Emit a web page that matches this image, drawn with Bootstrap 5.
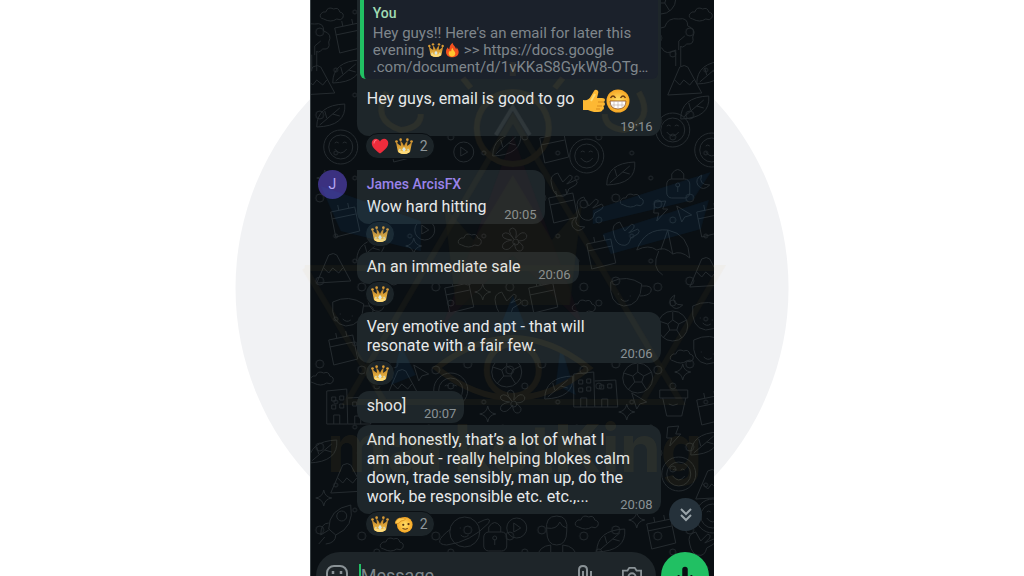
<!DOCTYPE html>
<html lang="en">
<head>
<meta charset="utf-8">
<meta name="viewport" content="width=device-width, initial-scale=1">
<title>Group chat</title>
<link href="https://cdn.jsdelivr.net/npm/bootstrap@5.3.0/dist/css/bootstrap.min.css" rel="stylesheet">
<style>
body{font-family:Roboto,"Noto Sans",sans-serif;background:#fff;color:#e6e9ea}
.stage{height:100vh}
.disc{width:54%;aspect-ratio:1;border-radius:50%;background:#f1f2f4;top:50%;left:50%;transform:translate(-50%,-50%)}
.phone{width:39.5%;min-width:320px;background:#0a0f13;border-left:1px solid #3c4347}
.wall,.mark-art{inset:0;width:100%;height:100%}
.mark-art{pointer-events:none;overflow:visible}
.thread{padding-left:46px}
.bubble{background:#1e262a;border-radius:12px;padding:5px 9px 8px 10px;font-size:16px;line-height:19px;width:fit-content;max-width:85%}
.bubble.short-msg{padding-right:58px}
.bubble.wide-msg{width:85%}
.bubble.first{border-radius:0 0 12px 12px;padding:0 3px 26px}
.bubble.named{border-top-left-radius:0;margin-top:11px}
.bubble.joined{margin-top:2px}
.bubble time{position:absolute;right:8px;bottom:2px;font-size:13px;line-height:15px;color:#899195}
.quote{background:#1b212b;border-left:4px solid #21c063;border-radius:0 0 6px 6px;padding:4px 0 3px 9px;font-size:15px;line-height:17px;color:#7f868b;white-space:nowrap}
.quote-name{font-size:14px;line-height:18px;margin-bottom:3px;color:#a0dbb4;font-weight:500}
.sender{font-size:14px;line-height:18px;font-weight:500;color:#9a83ea;margin-bottom:4px}
.first-text{padding:10px 7px 0;line-height:20px}
.emo{width:16px;height:16px;vertical-align:-3px}
.emo-lg{width:24px;height:24px;margin:-4px 0 -3px;vertical-align:-6px}
.react{height:26px;border:1px solid #0a0f13;background:#1c2428;border-radius:13px;margin:-3px 0 5px 8px;padding:0 5px;color:#8f979b;font-size:14px;line-height:20px;gap:6px;width:fit-content}
.react .emo{width:18px;height:18px}
.react span{padding:0 1px}
.avatar{width:29px;height:29px;left:-39px;top:0;border-radius:50%;background:#3b3180;color:#b6a8f5;font-size:14px}
.composer{margin-top:15px;padding:0 5px 0 5px;gap:5px}
.field{height:48px;min-width:0;border-radius:24px;background:#1e2529;padding:0 13px 0 10px;color:#8a9296}
.field input{background:none;border:0;outline:0;color:#e6e9ea;font-size:18px;padding:0;width:0;line-height:20px}
.field input::placeholder{color:#7f878b;opacity:1}
.caret{width:2px;height:24px;background:#21c063;margin-left:11px}
.icon-btn{background:none;border:0;padding:0;color:#8a9296;line-height:0}
.mic{width:48px;height:48px;border-radius:50%;background:#21c063;color:#0a0f13}
.jump{width:33px;height:33px;border-radius:50%;background:#25313a;color:#9aa4a9;right:12px;top:-54px}
</style>
</head>
<body>
<svg width="0" height="0" class="position-absolute" aria-hidden="true">
<defs>
<linearGradient id="gold" x2="0" y2="1"><stop stop-color="#b87c26"/><stop offset="1" stop-color="#ffc94a"/></linearGradient>
<radialGradient id="skin"><stop stop-color="#ffe16a"/><stop offset="1" stop-color="#f6a623"/></radialGradient>
<symbol id="crown" viewBox="0 0 24 24"><path d="M7 14L9 6l3 6 3-6 2 8-5 3z" fill="#7a5018"/><path d="M1 6l4 4 3 2L7 4l4 6 1 3 1-3 4-6-1 8 3-2 4-4-3 14q-8 5-16 0z" fill="url(#gold)"/><g fill="#d99b35"><circle cx="2" cy="6" r="1.800"/><circle cx="7.500" cy="3.500" r="1.800"/><circle cx="16.500" cy="3.500" r="1.800"/><circle cx="22" cy="6" r="1.800"/></g><path d="M4.500 17q7.500 4 15 0l-.5 3.500q-7 4-14 0z" fill="#ffdc7a"/><path d="M12 13l2.500 3.500L12 20l-2.500-3.500z" fill="#d5e6e4"/><circle cx="6.500" cy="17" r="1.300" fill="#d9d6b0"/><circle cx="17.500" cy="17" r="1.300" fill="#d9d6b0"/></symbol>
<symbol id="heart" viewBox="0 0 24 24"><path d="M12 22C5 17 1 13 1 8c0-6 8-8 11-2 3-6 11-4 11 2 0 5-4 9-11 14z" fill="#ee2c3c"/><path d="M4 8q0-3 3-4" stroke="#ff7480" stroke-width="1.500" fill="none" stroke-linecap="round"/></symbol>
<symbol id="fire" viewBox="0 0 24 24"><path d="M12 23C6 23 3 19 3 15c0-3 1-5 3-7 0 2 1 3 2 3 0-4 2-8 5-10 0 4 5 6 5 10 1-1 1-2 1-3 2 3 3 5 3 7 0 5-4 8-10 8z" fill="#f4511e"/><path d="M12 22c-3 0-5-2-5-5 0-2 1-3 2-4 1 1 1 1 2 1 0-2 0-4 2-5 0 3 4 5 4 8 0 3-2 5-5 5z" fill="#ffc52e"/></symbol>
<symbol id="thumb" viewBox="0 0 24 24"><path d="M1 11q6 1 8-4l3-5q1-2 3-1t1 4l-1 4h5q3 0 3 2t-2 2q2 0 2 2t-2 2q1 0 1 2t-2 2q1 0 0 1-1 1-4 1h-4q-4-1-6-2H1z" fill="#fdb833"/><path d="M16 13h5M15 17h5M14 20h4" stroke="#d98a1c" stroke-width="1" fill="none"/><path d="M9 12l4-7" stroke="#ffdb70" stroke-width="2"/></symbol>
<symbol id="grin" viewBox="0 0 24 24"><circle cx="12" cy="12" r="11.500" fill="url(#skin)"/><path d="M4.500 9q2.500-4 5 0M14.500 9q2.500-4 5 0" stroke="#6b3d12" stroke-width="1.400" fill="none"/><path d="M4 12h16q0 8-8 8t-8-8z" fill="#fff" stroke="#8a4d1c" stroke-width=".8"/><path d="M4.500 16h15M8 12v7M12 12v8M16 12v7" stroke="#b9aaa0" stroke-width=".6"/></symbol>
<symbol id="salute" viewBox="0 0 24 24"><circle cx="13" cy="13" r="10.500" fill="url(#skin)"/><circle cx="11" cy="13" r="1.500" fill="#59320f"/><circle cx="18" cy="12" r="1.500" fill="#59320f"/><path d="M10 18q4 2 7 0" stroke="#59320f" stroke-width="1.300" fill="none"/><path d="M0 10Q2 5 6 4l7 0q2 2-1 3l-4 1q-3 4-7 4z" fill="#ffc74a" stroke="#c77d17" stroke-width=".8"/></symbol>
<g id="d-cloud"><path d="M-9 5q-5-1-3-5 2-3 5-2 2-6 8-3 5-2 6 3 5 1 3 6-2 3-6 1-6 4-13 0z"/></g>
<g id="d-smile"><circle r="17"/><circle r="12"/><path d="M-6 2q6 8 12 0M-6-4q2-2 4 0M2-4q2-2 4 0"/></g>
<g id="d-star"><path d="M0-8q1 7 8 8-7 1-8 8-1-7-8-8 7-1 8-8z"/></g>
<g id="d-tri"><path d="M-16 15L-4-13q5-3 8 0l14 26zM-9 0l5 5 4-5 6 5 4-5"/></g>
<g id="d-tree"><path d="M-3 24V8q-10 6-14-2-9-4-4-12-2-8 7-9 3-10 14-8 9-2 9 7 9 3 5 11 2 8-6 7-5 5-6 2v20M0 8v-9l6-5"/></g>
<g id="d-box"><path d="M-14-10L10-15l5 24-24 6zM-13-3l24-5M-6-12l-1-5M4-14l-1-5"/></g>
<g id="d-moon"><path d="M-2-7q-7 4-4 10 5 7 12 0-12 0-8-10z"/></g>
<g id="d-hand"><path d="M-13 4q-3-10 6-12l5 9 7-7q4 1 2 4l-5 5 9-4q3 2 0 5l-7 4q-2 9-9 7-6-1-8-11z"/></g>
<g id="d-lock"><rect x="-11" y="-6" width="23" height="19" rx="5"/><path d="M-6-6v-5q6-9 12 0v5M0 1v6"/><circle r="2"/></g>
<g id="d-bolt"><path d="M-5-9L6-10 3-2 8-2-3 10-1 2-6 2z"/></g>
<g id="d-arrow"><path d="M-7-7L8 2 1 4-2 9z"/></g>
<g id="d-umb"><path d="M-26 8Q-18-14 5-12 26-8 27 16 18 8 10 12 2 4-6 8q-8-6-20 0zM-2 8L5-12l5 24M-4 9q-8 17 4 24"/></g>
<g id="d-cup"><path d="M-16-10q16-8 31 2-1 22-18 22-15-2-13-24zM15-6q12-1 9 6-3 4-11 4M-9 2h1M3 4h1M-6 7q4 4 8 1"/></g>
<g id="d-leaf"><path d="M-14 11q0-22 28-23 2 22-28 23zM-11 9L9-8M-4 2l-2-7M2-2l7 2"/></g>
<g id="d-ball"><circle r="15"/><path d="M-5-2L0-6l6 4-2 6h-7zM0-6v-8M6-2l8-4M4 4l5 8M-3 4l-6 7M-5-2l-9-3"/></g>
<g id="d-build"><path d="M-22 18v-33l20-2 1 35zM-1-8l21-1 2 27H-1M-15 18V9h6v9M6 18v-8h6v8M-17-9h4v4h-4zM-9-10h4v4h-4zM-17-1h4v4h-4zM-9-2h4v4h-4zM4-4h4v4H4zM12-5h4v4h-4z"/></g>
<g id="d-pot"><path d="M-14-11h28v8h-28zM-11-3l4 18H8l4-18M-5 3q4 3 9 0"/></g>
<g id="d-flower"><circle r="3"/><path d="M-2-3q-8-10-1-11 5 1 3 10 7-9 11-3 1 6-9 6 9 6 3 10-6 1-6-8-7 10-12 5-2-6 9-8-11-1-9-6 5-4 11 5z"/></g>
<g id="d-rocket"><path d="M-12 9q0-20 22-24 4 22-15 30zM-12 3q-8 0-8 12l8-5M-5 15q0 8-10 9M-16 17l-6 7"/><circle cx="1" cy="-4" r="5"/></g>
<g id="d-planet"><circle r="15"/><path d="M-14-3Q-34 12-18 13 6 10 24-9 28-17 13-9M-5-4h1M4-5h1M-4 3q4 4 8 0"/></g>
<g id="d-play"><circle r="10"/><path d="M-3-5v9l7-4z"/></g>
<g id="d-boy"><path d="M-10-5q-2-15 10-15t10 15q0 14-10 14T-10-5zM-10-8q10 2 13-6 2 5 7 6M-20 22q2-12 14-13v9H6V9q13 1 14 13"/></g>
<g id="doodle-set">
<use href="#d-cloud" x="22" y="14"/><use href="#d-box" x="38" y="38"/><use href="#d-tree" x="4" y="47"/><use href="#d-leaf" x="36" y="72"/><use href="#d-tri" x="6" y="80"/><use href="#d-leaf" x="20" y="116"/><use href="#d-smile" x="30" y="147"/><use href="#d-star" x="14" y="178"/>
<use href="#d-box" x="92" y="147"/><use href="#d-play" x="153" y="152"/><use href="#d-leaf" x="196" y="145"/><use href="#d-box" x="243" y="148"/><use href="#d-smile" x="276" y="156"/><use href="#d-smile" x="362" y="130"/><use href="#d-smile" x="401" y="150"/><use href="#d-tri" x="373" y="80"/><use href="#d-tree" x="368" y="42"/><use href="#d-ball" x="350" y="-1"/><use href="#d-cloud" x="391" y="14"/><use href="#d-leaf" x="400" y="73"/><use href="#d-leaf" x="384" y="108"/>
<use href="#d-box" x="34" y="222"/><use href="#d-play" x="114" y="230"/><use href="#d-tri" x="22" y="268"/><use href="#d-leaf" x="60" y="250"/><use href="#d-star" x="103" y="246"/><use href="#d-cloud" x="160" y="240"/><use href="#d-flower" x="205" y="242"/><use href="#d-hand" x="254" y="181"/><use href="#d-hand" x="280" y="205"/><use href="#d-leaf" x="310" y="174"/><use href="#d-lock" x="367" y="185"/><use href="#d-moon" x="393" y="182"/><use href="#d-cloud" x="322" y="200"/><use href="#d-bolt" x="349" y="211"/><use href="#d-arrow" x="373" y="213"/><use href="#d-hand" x="316" y="230"/><use href="#d-moon" x="268" y="224"/><use href="#d-box" x="252" y="208"/><use href="#d-box" x="400" y="222"/><use href="#d-umb" x="352" y="242"/><use href="#d-box" x="290" y="254"/>
<use href="#d-cup" x="38" y="312"/><use href="#d-box" x="32" y="350"/><use href="#d-hand" x="70" y="296"/><use href="#d-star" x="172" y="292"/><use href="#d-box" x="148" y="298"/><use href="#d-hand" x="198" y="300"/><use href="#d-box" x="232" y="298"/><use href="#d-cloud" x="274" y="306"/><use href="#d-cup" x="316" y="292"/><use href="#d-moon" x="366" y="302"/><use href="#d-ball" x="362" y="326"/><use href="#d-tri" x="395" y="272"/><use href="#d-cup" x="399" y="350"/><use href="#d-cup" x="398" y="316"/><use href="#d-cloud" x="372" y="356"/>
<use href="#d-build" x="285" y="389"/><use href="#d-ball" x="327" y="378"/><use href="#d-leaf" x="248" y="388"/><use href="#d-flower" x="203" y="404"/><use href="#d-ball" x="196" y="372"/><use href="#d-smile" x="140" y="390"/><use href="#d-arrow" x="110" y="372"/><use href="#d-tri" x="91" y="384"/><use href="#d-build" x="38" y="406"/><use href="#d-pot" x="363" y="401"/><use href="#d-arrow" x="328" y="400"/><use href="#d-star" x="316" y="412"/><use href="#d-star" x="177" y="414"/><use href="#d-star" x="372" y="372"/><use href="#d-box" x="400" y="410"/><use href="#d-cloud" x="12" y="378"/>
<use href="#d-leaf" x="12" y="452"/><use href="#d-tri" x="36" y="478"/><use href="#d-star" x="13" y="498"/><use href="#d-rocket" x="30" y="520"/><use href="#d-cloud" x="82" y="544"/><use href="#d-planet" x="154" y="532"/><use href="#d-lock" x="184" y="538"/><use href="#d-play" x="206" y="528"/><use href="#d-boy" x="246" y="536"/><use href="#d-cloud" x="277" y="522"/><use href="#d-leaf" x="300" y="541"/><use href="#d-star" x="326" y="520"/><use href="#d-box" x="350" y="534"/><use href="#d-bolt" x="362" y="436"/><use href="#d-smile" x="368" y="474"/><use href="#d-leaf" x="394" y="444"/><use href="#d-tri" x="401" y="484"/><use href="#d-smile" x="402" y="516"/><use href="#d-hand" x="392" y="540"/>
</g>
<pattern id="dots" width="74" height="83" patternUnits="userSpaceOnUse"><g fill="none" stroke="#22282c"><circle cx="9" cy="32" r="4"/><circle cx="44" cy="12" r="2"/><circle cx="66" cy="54" r="3"/><circle cx="25" cy="70" r="2"/><circle cx="51" cy="38" r="4"/></g></pattern>
</defs>
</svg>

<main class="stage position-relative overflow-hidden d-flex justify-content-center">
  <div class="disc position-absolute"></div>
  <section class="phone position-relative" aria-label="Group chat">
    <svg class="wall position-absolute" viewBox="0 0 404 576" preserveAspectRatio="xMidYMin slice" aria-hidden="true">
      <rect width="404" height="576" fill="url(#dots)"/>
      <use href="#doodle-set" fill="none" stroke="#252b2f" stroke-linejoin="round"/>
    </svg>

    <div class="thread position-relative">
      <article class="bubble first wide-msg position-relative">
        <div class="quote">
          <div class="quote-name">You</div>
          Hey guys!! Here's an email for later this<br>evening <svg class="emo" role="img" aria-label="crown"><use href="#crown"/></svg><svg class="emo" role="img" aria-label="fire"><use href="#fire"/></svg> &gt;&gt; https://docs.google<br>.com/document/d/1vKKaS8GykW8-OTg…
        </div>
        <div class="first-text">Hey guys, email is good to go <svg class="emo-lg ms-1" role="img" aria-label="thumbs up"><use href="#thumb"/></svg><svg class="emo-lg" role="img" aria-label="grin"><use href="#grin"/></svg></div>
        <time>19:16</time>
      </article>
      <div class="react position-relative d-flex align-items-center"><svg class="emo"><use href="#heart"/></svg><svg class="emo"><use href="#crown"/></svg><span>2</span></div>

      <article class="bubble named short-msg position-relative">
        <div class="avatar position-absolute d-flex align-items-center justify-content-center">J</div>
        <div class="sender">James ArcisFX</div>
        Wow hard hitting<time>20:05</time>
      </article>
      <div class="react position-relative d-flex align-items-center"><svg class="emo"><use href="#crown"/></svg></div>

      <article class="bubble short-msg position-relative">An an immediate sale<time>20:06</time></article>
      <div class="react position-relative d-flex align-items-center"><svg class="emo"><use href="#crown"/></svg></div>

      <article class="bubble wide-msg position-relative">Very emotive and apt - that will<br>resonate with a fair few.<time>20:06</time></article>
      <div class="react position-relative d-flex align-items-center"><svg class="emo"><use href="#crown"/></svg></div>

      <article class="bubble short-msg position-relative">shoo]<time>20:07</time></article>
      <article class="bubble joined wide-msg position-relative">And honestly, that’s a lot of what I<br>am about - really helping blokes calm<br>down, trade sensibly, man up, do the<br>work, be responsible etc. etc.,...<time>20:08</time></article>
      <div class="react position-relative d-flex align-items-center"><svg class="emo"><use href="#crown"/></svg><svg class="emo"><use href="#salute"/></svg><span>2</span></div>
    </div>

    <svg class="mark-art position-absolute" viewBox="0 0 404 576" preserveAspectRatio="xMidYMin slice" aria-hidden="true">
      <g opacity=".08">
        <path d="M10 186l100 35 0 30-80-20zM400 172l-118 38 0 14 100-24zM398 200l-106 34 8 20 90-25z" fill="#1b7dd8"/>
        <path d="M202 135l70 190-70-70-70 70z" fill="#a81d3a" opacity=".6"/>
        <path d="M133 205l30 35 39-65 39 65 30-35-12 100H145z" fill="#c59a2c" opacity=".6"/>
        <path d="M188 330l14-35 14 35zM250 345l15 50-20-10zM90 345l-10 40 25-10z" fill="#1b7dd8"/>
        <g fill="none" stroke="#d9a441" stroke-width="6">
          <path d="M-6 268H410L330 404M-6 268L75 404" opacity=".6"/>
          <path d="M202 118L36 402H370z" opacity=".6"/>
          <circle cx="202" cy="128" r="36"/>
          <path d="M126 368q76-60 152 0-76 60-152 0z"/><circle cx="202" cy="370" r="26"/>
          <path d="M76 92q-16 28 14 38 20-2 20-16M328 92q16 28-14 38-20-2-20-16M202 76v-14M160 88l-8-10M244 88l8-10"/>
        </g>
        <path d="M185 135l17-28 17 28" stroke="#fff" stroke-width="4" fill="none"/>
      </g>
      <text x="204" y="472" text-anchor="middle" fill="#c9a03a" opacity=".07" font-family="Inter,sans-serif" font-weight="700" font-size="66">marketKing</text>
    </svg>

    <form class="composer position-relative d-flex" onsubmit="return false">
      <button type="button" class="jump btn p-0 border-0 position-absolute d-flex align-items-center justify-content-center" aria-label="Scroll to latest"><svg width="14" height="16" viewBox="0 0 14 16" fill="none" stroke="currentColor" stroke-width="2"><path d="M2 2l5 5 5-5M2 8l5 5 5-5"/></svg></button>
      <div class="field flex-grow-1 d-flex align-items-center">
        <button type="button" class="icon-btn" aria-label="Emoji"><svg width="22" height="22" viewBox="0 0 22 22" fill="none" stroke="currentColor" stroke-width="2"><rect x="1" y="1" width="20" height="20" rx="7"/><path d="M6 13q5 6 10 0z"/><path d="M7 6v3M15 6v3" stroke-width="2.500"/></svg></button>
        <span class="caret"></span>
        <input class="flex-grow-1" type="text" placeholder="Message" aria-label="Message">
        <button type="button" class="icon-btn me-4" aria-label="Attach"><svg width="16" height="24" viewBox="0 0 16 24" fill="none" stroke="currentColor" stroke-width="2"><path d="M14 7v9q0 6-6 6t-6-6V6q0-4 4-4t4 4v10q0 2-2 2t-2-2V7"/></svg></button>
        <button type="button" class="icon-btn ms-1" aria-label="Camera"><svg width="22" height="20" viewBox="0 0 24 22" fill="none" stroke="currentColor" stroke-width="2"><path d="M2 5h5l2-3h6l2 3h5v15H2z"/><circle cx="12" cy="12" r="4"/></svg></button>
      </div>
      <button type="button" class="mic btn p-0 border-0 flex-shrink-0 d-flex align-items-center justify-content-center" aria-label="Record"><svg width="20" height="22" viewBox="0 0 20 24"><rect x="7" y="2" width="6" height="13" rx="3" fill="currentColor"/><path d="M3 11q0 7 7 7t7-7M10 18v5" fill="none" stroke="currentColor" stroke-width="2"/></svg></button>
    </form>
  </section>
</main>
<script src="https://cdn.jsdelivr.net/npm/bootstrap@5.3.0/dist/js/bootstrap.bundle.min.js"></script>
</body>
</html>
